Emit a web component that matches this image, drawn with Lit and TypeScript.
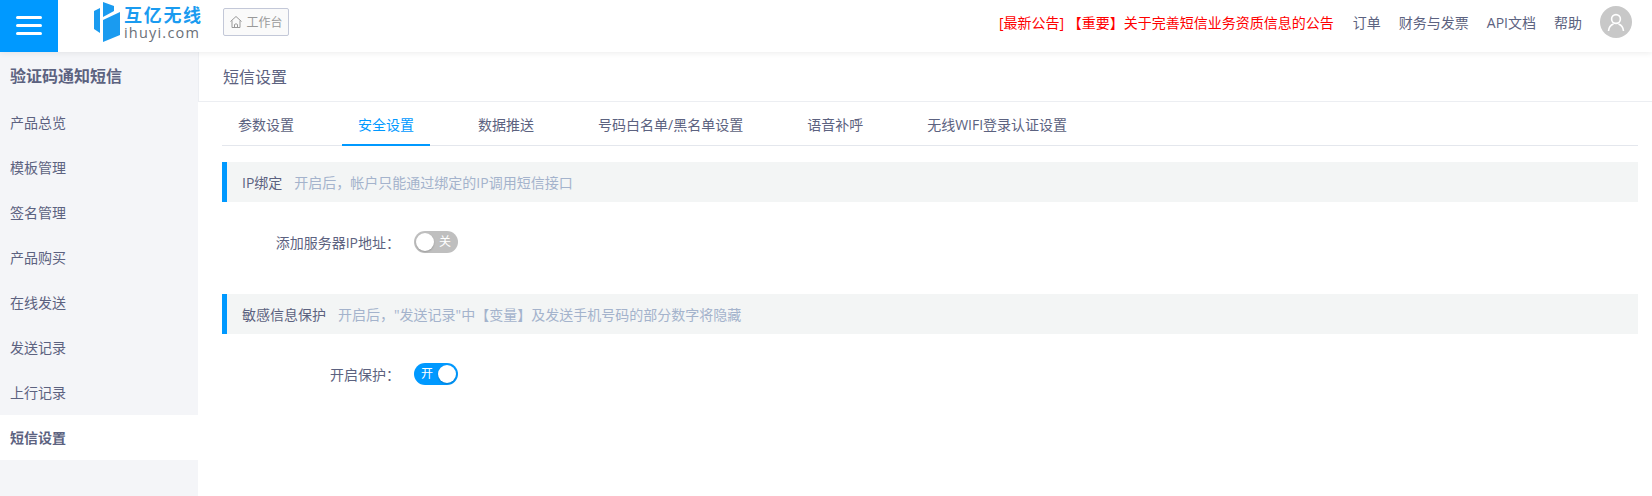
import { LitElement, html, css } from "lit";
import { customElement } from "lit/decorators.js";

const menu = ["产品总览", "模板管理", "签名管理", "产品购买", "在线发送", "发送记录", "上行记录", "短信设置"];
const tabs = ["参数设置", "安全设置", "数据推送", "号码白名单/黑名单设置", "语音补呼", "无线WIFI登录认证设置"];

@customElement("app-root")
export class AppRoot extends LitElement {
  static styles = css`
    :host { display: block; width: 1652px; height: 496px; overflow: hidden; background: #fff; color: #5c6280;
      font-family: "Open Sans", "Noto Sans CJK SC", sans-serif; font-size: 14px; }
    .top { height: 52px; display: flex; background: #fff; box-shadow: 0 1px 6px rgba(0,0,0,.08); position: relative; z-index: 2; }
    .burger { width: 58px; height: 52px; flex: none; background: #0099ff; display: flex; flex-direction: column; justify-content: center; align-items: center; gap: 5px; padding-bottom: 1px; box-sizing: border-box; }
    .burger i { display: block; width: 26px; height: 3px; border-radius: 2px; background: #fff; }
    .head { flex: 1; height: 44px; display: flex; align-items: center; }
    .logo { display: flex; align-items: center; margin-left: 36px; gap: 4px; }
    .logotext { display: flex; flex-direction: column; width: 79px; }
    .logotext b { font-weight: 700; font-size: 18px; letter-spacing: 1.7px; color: #1a9bf0; line-height: 20px; white-space: nowrap; }
    .logotext span { font-size: 14.5px; letter-spacing: 1.2px; color: #6a7078; line-height: 15px; white-space: nowrap; }
    .work { margin-left: 20px; width: 66px; height: 28px; box-sizing: border-box; border: 1px solid #c3c8d8; border-radius: 2px; background: #fafafa;
      display: flex; align-items: center; justify-content: center; gap: 3px; font-size: 12px; color: #999; }
    .right { margin-left: auto; display: flex; align-items: center; padding-right: 20px; font-size: 14px; }
    .notice { color: #f00; margin-right: 19px; }
    .link { margin-right: 18px; }
    .avatar { width: 32px; height: 32px; border-radius: 50%; background: #c8c8c8; display: flex; align-items: center; justify-content: center; }
    .body { display: flex; height: 444px; }
    .side { width: 198px; background: #f4f5f8; flex: none; }
    .side h2 { margin: 0; height: 48px; line-height: 48px; padding-left: 10px; font-size: 16px; font-weight: 700; color: #5c6280; }
    .item { height: 45px; line-height: 45px; padding-left: 10px; font-size: 14px; color: #5c6280; }
    .item.on { background: #fff; font-weight: 700; }
    .main { flex: 1; min-width: 0; }
    .title { height: 50px; line-height: 50px; padding-left: 24px; font-size: 16px; border-bottom: 1px solid #eceef2; border-left: 1px solid #eceef2; box-sizing: border-box; }
    .content { padding: 0 14px 0 24px; }
    .tabs { display: flex; gap: 32px; height: 44px; border-bottom: 1px solid #e4e7ed; box-sizing: border-box; }
    .tab { padding: 0 16px; line-height: 45px; font-size: 14px; height: 44px; box-sizing: border-box; }
    .tab.on { color: #0099ff; border-bottom: 2px solid #0099ff; }
    .bar { height: 40px; background: #f3f5f5; border-left: 5px solid #0099ff; display: flex; align-items: center; padding-left: 15px; font-size: 14px; gap: 12px; }
    .bar span { color: #a4b3cc; }
    .sec1 { margin-top: 16px; }
    .sec2 { margin-top: 41px; }
    .row { display: flex; align-items: center; height: 22px; margin-top: 29px; font-size: 14px; }
    .label { width: 178px; text-align: right; margin-right: 14px; }
    .sw { width: 44px; height: 22px; border-radius: 11px; position: relative; color: #fff; font-size: 12px; line-height: 22px; }
    .sw.off { background: #bfbfbf; }
    .sw.onn { background: #0099ff; }
    .sw .k { position: absolute; top: 2px; width: 18px; height: 18px; border-radius: 50%; background: #fff; box-shadow: 0 1px 2px rgba(0,0,0,.2); }
    .sw.off .k { left: 2px; }
    .sw.onn .k { right: 2px; }
    .sw.off .t { position: absolute; right: 7px; }
    .sw.onn .t { position: absolute; left: 7px; }
  `;

  render() {
    return html`
      <div class="top">
        <div class="burger"><i></i><i></i><i></i></div>
        <div class="head">
          <div class="logo">
            <svg width="26" height="40" viewBox="0 0 26 40">
              <path fill="#1a9bf0" d="M0 9 L6 6 L6 31 L0 27 Z" />
              <path fill="#1a9bf0" d="M9 0 L20 4 L20 9 L9 15 Z" />
              <path fill="#1a9bf0" d="M9 18 L26 10 L26 33 L9 40 Z" />
            </svg>
            <div class="logotext"><b>互亿无线</b><span>ihuyi.com</span></div>
          </div>
          <div class="work">
            <svg width="14" height="14" viewBox="0 0 14 14" fill="none" stroke="#999" stroke-width="1">
              <path d="M1.5 6.5 L7 1.5 L12.5 6.5 M3 5.5 V12.5 H11 V5.5 M5.5 12.5 V9.5 Q7 8 8.5 9.5 V12.5" />
            </svg>工作台
          </div>
          <div class="right">
            <div class="notice">[最新公告] 【重要】关于完善短信业务资质信息的公告</div>
            <div class="link">订单</div>
            <div class="link">财务与发票</div>
            <div class="link">API文档</div>
            <div class="link">帮助</div>
            <div class="avatar">
              <svg width="20" height="20" viewBox="0 0 20 20" fill="none" stroke="#fff" stroke-width="1.6">
                <circle cx="10" cy="7" r="4.4" />
                <path d="M2.5 19 C3 14 6 12.5 7.5 12 M17.5 19 C17 14 14 12.5 12.5 12" />
              </svg>
            </div>
          </div>
        </div>
      </div>
      <div class="body">
        <div class="side">
          <h2>验证码通知短信</h2>
          ${menu.map((m, i) => html`<div class="item ${i === 7 ? "on" : ""}">${m}</div>`)}
        </div>
        <div class="main">
          <div class="title">短信设置</div>
          <div class="content">
            <div class="tabs">
              ${tabs.map((t, i) => html`<div class="tab ${i === 1 ? "on" : ""}">${t}</div>`)}
            </div>
            <div class="bar sec1">IP绑定<span>开启后，帐户只能通过绑定的IP调用短信接口</span></div>
            <div class="row"><div class="label">添加服务器IP地址：</div>
              <div class="sw off"><div class="k"></div><div class="t">关</div></div></div>
            <div class="bar sec2">敏感信息保护<span>开启后，"发送记录"中【变量】及发送手机号码的部分数字将隐藏</span></div>
            <div class="row"><div class="label">开启保护：</div>
              <div class="sw onn"><div class="k"></div><div class="t">开</div></div></div>
          </div>
        </div>
      </div>
    `;
  }
}
